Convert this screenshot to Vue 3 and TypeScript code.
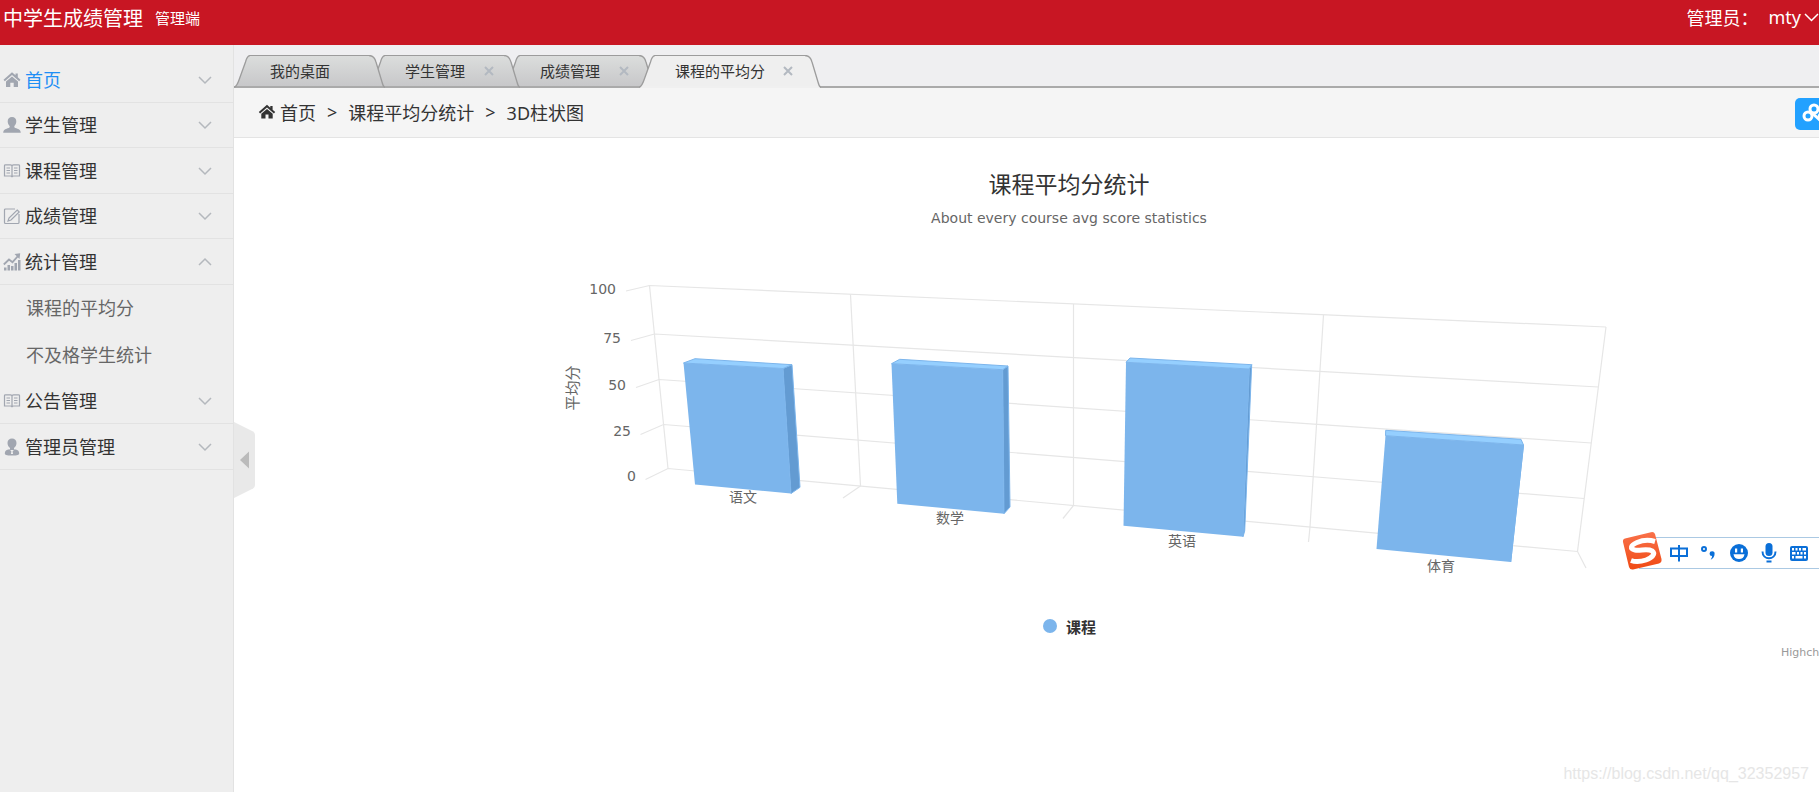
<script setup lang="ts">
import { ref } from 'vue'

interface MenuItem { label: string; icon: string; children?: string[] }
interface Tab { label: string; closable: boolean }
interface Bar { label: string; lx: number; ly: number; front: string; top: string; side: string }

const menu: MenuItem[] = [
  { label: '首页', icon: 'home' },
  { label: '学生管理', icon: 'user' },
  { label: '课程管理', icon: 'book' },
  { label: '成绩管理', icon: 'edit' },
  { label: '统计管理', icon: 'stats', children: ['课程的平均分', '不及格学生统计'] },
  { label: '公告管理', icon: 'book' },
  { label: '管理员管理', icon: 'admin' },
]
const active = ref('首页')
const opened = ref('统计管理')
function toggle(label: string) {
  opened.value = opened.value === label ? '' : label
}

const tabs: Tab[] = [
  { label: '我的桌面', closable: false },
  { label: '学生管理', closable: true },
  { label: '成绩管理', closable: true },
  { label: '课程的平均分', closable: true },
]
const activeTab = ref(3)

const levels = [
  { value: 100, x: 616, y: 294, d: 'M626 291 L649.5 285.5 L1606 327' },
  { value: 75, x: 621, y: 343, d: 'M631 340.5 L654.5 334 L1598.5 387' },
  { value: 50, x: 626, y: 390, d: 'M636 387.5 L659 379.5 L1591.5 443' },
  { value: 25, x: 631, y: 436, d: 'M640.5 434.5 L663.5 424.5 L1584 498.5' },
  { value: 0, x: 636, y: 481, d: 'M645.5 479.5 L668 468.5 L1577.5 551.5' },
]
const walls = [
  'M649.5 285.5 L668 468.5',
  'M850.5 294.5 L860.5 486 L843 498',
  'M1073.5 304 V505.5 L1063 518.5',
  'M1323.5 315 L1310 527 L1308.5 542',
  'M1606 327 L1577.5 551.5 L1586 568',
]
const bars: Bar[] = [
  {
    label: '语文', lx: 743, ly: 502,
    front: '683.5,363 783,368.5 791,493.5 695,484.5',
    top: '683.5,363 695,358.7 792,364.7 783,368.5',
    side: '783,368.5 792,364.7 800,487.3 791,493.5',
  },
  {
    label: '数学', lx: 950, ly: 523,
    front: '891.5,363.7 1002.7,369.7 1004,513.7 897.3,503.7',
    top: '891.5,363.7 899.7,359.3 1008,366 1002.7,369.7',
    side: '1002.7,369.7 1008,366 1010,507 1004,513.7',
  },
  {
    label: '英语', lx: 1182, ly: 546,
    front: '1126,362.3 1249.3,369 1243,536.7 1123.5,525.7',
    top: '1126,362.3 1130,358 1251.7,364.7 1249.3,369',
    side: '1249.3,369 1251.7,364.7 1244.7,531 1243,536.7',
  },
  {
    label: '体育', lx: 1441, ly: 571,
    front: '1385.5,435.7 1523.5,445 1510.7,562 1376.5,549',
    top: '1385.5,435.7 1385.7,430.3 1521,439.3 1523.5,445',
    side: '1523.5,445 1523.5,445 1510.7,562 1510.7,562',
  },
]
</script>

<template>
  <div class="page">
    <header class="topbar">
      <div class="brand">
        <h1>中学生成绩管理</h1>
        <span class="role">管理端</span>
      </div>
      <div class="account">
        <span>管理员：</span>
        <button type="button" class="user">
          mty
          <svg width="16" height="16" viewBox="0 0 16 16" aria-hidden="true"><path d="M2 5l6.500 6.500L15 5" /></svg>
        </button>
      </div>
    </header>

    <div class="body">
      <nav class="sidebar" aria-label="菜单">
        <ul class="menu">
          <li v-for="m in menu" :key="m.label">
            <button
              type="button"
              class="item"
              :class="{ active: active === m.label }"
              :aria-expanded="opened === m.label"
              @click="toggle(m.label)"
            >
              <svg class="icon" width="18" height="18" viewBox="0 0 18 18" aria-hidden="true">
                <template v-if="m.icon === 'home'">
                  <path class="fill" d="M9 1.200L.500 8.700l1.300 1.500L9 4l7.200 6.200 1.300-1.500-2.700-2.400V2.500h-2.300v1.800z" />
                  <path class="fill" d="M9 5.400l-6 5.200V16h4.300v-4.300h3.400V16H15v-5.400z" />
                </template>
                <path
                  v-else-if="m.icon === 'user'"
                  class="fill"
                  d="M9 1c-2.700 0-4.300 1.700-4.300 4.300 0 2 .8 3.700 1.900 4.700.3 1-.1 1.600-1 2C3 13 .3 13.300.2 16.800h17.600C17.700 13.300 15 13 12.400 12c-.9-.4-1.300-1-1-2 1.100-1 1.900-2.700 1.900-4.700C13.300 2.700 11.700 1 9 1z"
                />
                <template v-else-if="m.icon === 'book'">
                  <path class="line" d="M1.500 3.500Q1.500 2.800 2.500 2.800H7.500Q9 2.800 9 4Q9 2.800 10.500 2.800H15.500Q16.500 2.800 16.500 3.500V14H10.500Q9 14 9 15.200Q9 14 7.500 14H1.500zM9 4V15" />
                  <path class="line" d="M3.500 6H7M3.500 8.500H7M3.500 11H7M11 6H14.500M11 8.500H14.500M11 11H14.500" />
                </template>
                <template v-else-if="m.icon === 'edit'">
                  <path class="line" d="M12 2H2.500Q1.500 2 1.500 3V15.500Q1.500 16.500 2.500 16.500H15Q16 16.500 16 15.500V7" />
                  <path class="line" d="M14.200 3l2 2L8 13l-3 1 1-3z" />
                </template>
                <template v-else-if="m.icon === 'stats'">
                  <path class="fill" d="M1 14.500h2.500v3H1zM4.500 12h2.500v5.500H4.500zM8 13h2.500v4.500H8zM11.500 10h2.500v7.500h-2.500zM15 7h2.500v10.500H15z" />
                  <path class="bold" d="M.800 11.500L6 6.500l3.500 2.700L15 3" />
                  <path class="fill" d="M11.500 1L17.200.200l-.7 5.900z" />
                </template>
                <template v-else>
                  <path class="fill" d="M9 .5C6.300.500 4.500 2.300 4.500 4.900c0 2.300 1.100 4 2.500 5v2h4v-2c1.400-1 2.500-2.700 2.500-5C13.500 2.300 11.700.500 9 .500z" />
                  <path class="fill" d="M6.500 11.200c-3.200.4-4.700 1.700-4.700 4 0 1.500 1.500 2.300 7.200 2.300s7.200-.8 7.200-2.300c0-2.300-1.500-3.600-4.700-4L9.600 13.400l.5 2.600H7.900l.5-2.600z" />
                </template>
              </svg>
              <span class="text">{{ m.label }}</span>
              <svg class="chevron" width="16" height="16" viewBox="0 0 16 16" aria-hidden="true">
                <path :d="opened === m.label ? 'M2 11l6-6 6 6' : 'M2 5l6 6 6-6'" />
              </svg>
            </button>
            <ul v-if="m.children && opened === m.label" class="sub">
              <li v-for="c in m.children" :key="c"><a href="#">{{ c }}</a></li>
            </ul>
          </li>
        </ul>
      </nav>

      <main class="content">
        <div class="tabs">
          <div
            v-for="(t, i) in tabs"
            :key="t.label"
            class="tab"
            :class="{ current: i === activeTab }"
            :style="{ zIndex: i === activeTab ? 9 : 8 - i }"
          >
            <svg class="edge" width="16" height="33" viewBox="0 0 16 33" aria-hidden="true">
              <path class="face" d="M0 33C3 31 4 28 5 25L11.500 7C12.500 3 13.500 0 16 0V33z" />
              <path class="base" d="M1 32H16" />
              <path class="rim" d="M0 32.500C3 31 4 28 5 25L11.500 7C12.500 3 13.500 .5 16.500 .5" />
            </svg>
            <div class="mid">
              <button type="button" class="name" @click="activeTab = i">{{ t.label }}</button>
              <button v-if="t.closable" type="button" class="close" :aria-label="'关闭' + t.label">
                <svg width="10" height="10" viewBox="0 0 10 10" aria-hidden="true"><path d="M1 1l8 8M9 1L1 9" /></svg>
              </button>
            </div>
            <svg class="edge" width="16" height="33" viewBox="0 0 16 33" aria-hidden="true">
              <path class="face" d="M0 0C4 0 6 3 7 7L13 27C14 31 14.500 32 16 33H0z" />
              <path class="base" d="M0 32H15" />
              <path class="rim" d="M0 .5C4 .5 6 3 7 7L13 27C14 31 14.500 32 16 32.500" />
            </svg>
          </div>
          <svg class="defs" width="0" height="0" aria-hidden="true">
            <defs>
              <linearGradient id="tab-face" x1="0" y1="0" x2="0" y2="1">
                <stop offset="0" stop-color="#dcdedd" />
                <stop offset="1" stop-color="#c6c6c8" />
              </linearGradient>
            </defs>
          </svg>
        </div>

        <div class="crumbs">
          <nav class="trail" aria-label="位置">
            <svg width="18" height="18" viewBox="0 0 18 18" aria-hidden="true">
              <path d="M9 1.800L.800 9l1.300 1.400L9 4.500l6.900 5.900L17.200 9l-2.600-2.300V3h-2.300v1.700z" />
              <path d="M9 5.900l-5.700 4.900v4.700h4.200v-3.900h3v3.900h4.200v-4.700z" />
            </svg>
            <a href="#">首页</a><span class="sep">&gt;</span>
            <a href="#">课程平均分统计</a><span class="sep">&gt;</span>
            <span>3D柱状图</span>
          </nav>
          <button type="button" class="link" aria-label="链接">
            <svg width="32" height="28" viewBox="0 0 32 28" aria-hidden="true">
              <circle cx="8" cy="16" r="4" />
              <circle cx="14" cy="9" r="4" />
              <path d="M12 13l9 8" />
              <circle cx="23" cy="17" r="4" />
            </svg>
          </button>
        </div>

        <section class="chart-box">
          <svg class="chart" viewBox="234 138 1669 560" role="img" aria-label="课程平均分统计">
            <text class="title" x="1069" y="193" text-anchor="middle">课程平均分统计</text>
            <text class="subtitle" x="1069" y="223" text-anchor="middle">About every course avg score statistics</text>
            <g class="grid">
              <path v-for="l in levels" :key="l.value" :d="l.d" />
              <path v-for="w in walls" :key="w" :d="w" />
            </g>
            <text v-for="l in levels" :key="l.value" class="tick" :x="l.x" :y="l.y" text-anchor="end">{{ l.value }}</text>
            <text class="axis" x="572" y="388" text-anchor="middle" transform="rotate(-90 572 388)" dy="6">平均分</text>
            <g v-for="b in bars" :key="b.label">
              <polygon class="side" :points="b.side" />
              <polygon class="top" :points="b.top" />
              <polygon class="front" :points="b.front" />
              <text class="cat" :x="b.lx" :y="b.ly" text-anchor="middle">{{ b.label }}</text>
            </g>
            <circle class="front" cx="1050" cy="626" r="7" />
            <text class="legend" x="1066" y="633">课程</text>
            <text class="credit" x="1781" y="656">Highcharts.com</text>
          </svg>
        </section>
      </main>

      <button type="button" class="collapse" aria-label="收起菜单">
        <svg width="21" height="76" viewBox="0 0 21 76" aria-hidden="true">
          <path class="plate" d="M0 0L19 9.500Q21 10.500 21 13V63Q21 65.500 19 66.500L0 76z" />
          <path class="arrow" d="M6 38L15 29.500V46.500z" />
        </svg>
      </button>
    </div>

    <div class="ime">
      <svg class="logo" width="40" height="40" viewBox="0 0 40 40" aria-hidden="true">
        <defs>
          <linearGradient id="logo-face" x1="0" y1="0" x2="0" y2="1">
            <stop offset="0" stop-color="#f9714a" />
            <stop offset="1" stop-color="#f04a14" />
          </linearGradient>
        </defs>
        <path fill="url(#logo-face)" d="M3 7.500L29 1.200Q32 .500 33 3L39.500 28Q40 31.500 37 32.500L11 38.500Q8 39 7 36L1 11Q.500 8 3 7.500z" />
        <path class="swoosh" d="M33 10.500C28 9 21 9 15 11.500C8 14.500 8 18 13 19C18 19.800 26 17.500 30 19.800C34 23 30 27 24 29C19 30.700 13 31 9 29.500" />
      </svg>
      <svg class="glyph" width="18" height="18" viewBox="0 0 18 18" aria-hidden="true"><path class="s2" d="M1 4.500H17V12H1zM9 1V17.500" /></svg>
      <svg class="glyph" width="18" height="18" viewBox="0 0 18 18" aria-hidden="true">
        <circle class="s2" cx="4" cy="5" r="2" />
        <path class="f" d="M12 7.200a2.300 2.300 0 0 1 2.600 2.500c0 2.700-1.600 5-3.900 6 .9-1.400 1.400-2.500 1.300-3.600a2.400 2.400 0 0 1 0-4.900z" />
      </svg>
      <svg class="glyph" width="18" height="18" viewBox="0 0 18 18" aria-hidden="true">
        <circle class="f" cx="9" cy="9" r="9" />
        <path class="w" d="M5 4.500h2.200v4H5zM10.800 4.500H13v4h-2.200zM3.500 10.200H14.500C14 13.500 12 15 9 15S4 13.500 3.500 10.200z" />
      </svg>
      <svg class="glyph" width="18" height="20" viewBox="0 0 18 20" aria-hidden="true">
        <rect class="f" x="5.500" y="0" width="7" height="13" rx="3.500" />
        <path class="s2" d="M2.500 8.500C2.500 17.500 15.500 17.500 15.500 8.500" />
        <rect class="f" x="6.500" y="17.500" width="5" height="2" />
      </svg>
      <svg class="glyph" width="18" height="18" viewBox="0 0 18 18" aria-hidden="true">
        <rect class="f" x="0" y="2" width="18" height="15" rx="2" />
        <path class="w" d="M2 4h2v2.500H2zM5.500 4h2v2.500h-2zM9 4h2v2.500H9zM12.500 4H16v2.500h-3.500zM2 8h3.500v2.500H2zM7 8h2v2.500H7zM10.500 8h2v2.500h-2zM14 8h2v2.500h-2zM2 12h2v2.500H2zM5.500 12h7v2.500h-7zM14 12h2v2.500h-2z" />
      </svg>
    </div>

    <span class="watermark">https://blog.csdn.net/qq_32352957</span>
  </div>
</template>

<style>
html, body { margin: 0; height: 100%; }
#app { height: 100%; }
</style>

<style scoped>
.page {
  position: relative;
  display: flex;
  flex-direction: column;
  min-height: 100%;
  overflow: hidden;
  background: #fff;
  color: #333;
  font-family: "Noto Sans", "Noto Sans CJK SC", sans-serif;
  font-size: 18px;
}
button { padding: 0; border: 0; background: none; color: inherit; font: inherit; cursor: pointer; }
a { color: inherit; text-decoration: none; }
ul { margin: 0; padding: 0; list-style: none; }
svg { flex: none; }

.topbar {
  display: flex;
  justify-content: space-between;
  height: 45px;
  background: #c81623;
  color: #fff;
}
.brand, .account { display: flex; align-items: center; height: 34px; }
.brand { gap: 12px; padding-left: 3px; }
h1 { margin: 0; font-size: 20px; font-weight: 400; }
.role { font-size: 15px; }
.account { gap: 10px; }
.user { display: flex; align-items: center; gap: 2px; }
.user path { fill: none; stroke: #fff; stroke-width: 1.5; }

.body { position: relative; display: flex; flex: 1; }
.sidebar {
  flex: none;
  width: 233px;
  padding-top: 12px;
  border-right: 1px solid #e2e2e2;
  background: #eee;
}
.item {
  display: flex;
  align-items: center;
  width: 100%;
  height: 45px;
  padding: 0 20px 0 3px;
  box-sizing: border-box;
  border-bottom: 1px solid #e2e2e2;
  text-align: left;
}
.menu > li:nth-child(odd) > .item { height: 46px; }
.item.active { color: #1e8ff5; }
.icon { margin-right: 4px; }
.icon .fill { fill: #a1a6b0; }
.icon .line { fill: none; stroke: #a1a6b0; stroke-width: 1.2; }
.icon .bold { fill: none; stroke: #a1a6b0; stroke-width: 1.8; }
.text { flex: 1; padding-bottom: 2px; }
.chevron path { fill: none; stroke: #b4b8bd; stroke-width: 1.5; }
.sub a { display: block; padding-left: 26px; line-height: 47px; color: #666; }

.content { flex: 1; min-width: 0; overflow: hidden; }
.tabs {
  display: flex;
  height: 43px;
  padding-top: 10px;
  box-sizing: border-box;
  background: linear-gradient(#efeff1, #efeff1) top / 100% 41px no-repeat, #aaa;
}
.tab { position: relative; display: flex; margin-right: -16px; }
.mid {
  display: flex;
  align-items: center;
  justify-content: space-between;
  min-width: 119px;
  height: 33px;
  padding: 0 10px 0 20px;
  box-sizing: border-box;
  border-top: 1px solid #9c9c9c;
  border-bottom: 2px solid #aaa;
  background: linear-gradient(#dcdedd, #c6c6c8) border-box;
  font-size: 15px;
}
.name { padding-bottom: 1px; }
.edge .face { fill: url(#tab-face); }
.edge .base { stroke: #aaa; stroke-width: 2; }
.edge .rim { fill: none; stroke: #9c9c9c; stroke-width: 1.3; }
.current .mid { min-width: 150px; padding-right: 12px; border-bottom-color: #f0f0f0; background: #efefef; }
.current .face { fill: #efefef; }
.current .base { stroke: #f0f0f0; }
.close { display: flex; }
.close path { stroke: #b3b9c1; stroke-width: 2; }
.defs { position: absolute; }

.crumbs {
  display: flex;
  align-items: center;
  justify-content: space-between;
  height: 50px;
  box-sizing: border-box;
  padding-left: 24px;
  border-bottom: 1px solid #e4e4e4;
  background: #f5f5f5;
}
.trail { display: flex; align-items: center; padding-bottom: 2px; }
.trail svg { margin-right: 4px; fill: #333; }
.sep { margin: 0 11px; }
.link {
  display: flex;
  align-items: center;
  width: 44px;
  height: 32px;
  margin: 3px -20px 0 0;
  padding-left: 5px;
  border-radius: 5px;
  background: #22a1ff;
}
.link svg { fill: none; stroke: #fff; stroke-width: 3; }

.chart { display: block; width: calc(100% + 84px); }
.chart text { fill: #666; font-size: 14px; }
.chart .title { fill: #333; font-size: 23px; }
.chart .subtitle, .chart .tick { font-family: "DejaVu Sans", sans-serif; }
.chart .axis { font-size: 15px; }
.chart .legend { fill: #333; font-size: 15px; font-weight: 700; }
.chart .credit { fill: #999; font-family: "DejaVu Sans", sans-serif; font-size: 11px; }
.grid path { fill: none; stroke: #e6e6e6; stroke-width: 1.2; }
.front { fill: #7cb5ec; }
.top { fill: #95cfff; stroke: #7cb5ec; stroke-width: 1; }
.side { fill: #639bd2; stroke: #7cb5ec; stroke-width: 1; }

.collapse { position: absolute; top: 50%; left: 234px; margin-top: 3px; display: flex; }
.plate { fill: #e9e9e9; }
.arrow { fill: #bbb; }

.ime {
  position: absolute;
  top: 537px;
  right: 0;
  display: flex;
  align-items: center;
  gap: 12px;
  height: 32px;
  padding-right: 11px;
  box-sizing: border-box;
  border-top: 1px solid #abc9e3;
  border-bottom: 1px solid #abc9e3;
  background: #fff;
}
.logo { margin: -5px -4px 0 -17px; }
.swoosh { fill: none; stroke: #fff; stroke-width: 5; }
.glyph .s2 { fill: none; stroke: #0a6fd8; stroke-width: 2; }
.glyph .f { fill: #0a6fd8; }
.glyph .w { fill: #fff; }

.watermark {
  position: absolute;
  right: 10px;
  bottom: 9px;
  color: #e6e6e6;
  font-family: "Liberation Sans", Arial, sans-serif;
  font-size: 16px;
}
</style>
